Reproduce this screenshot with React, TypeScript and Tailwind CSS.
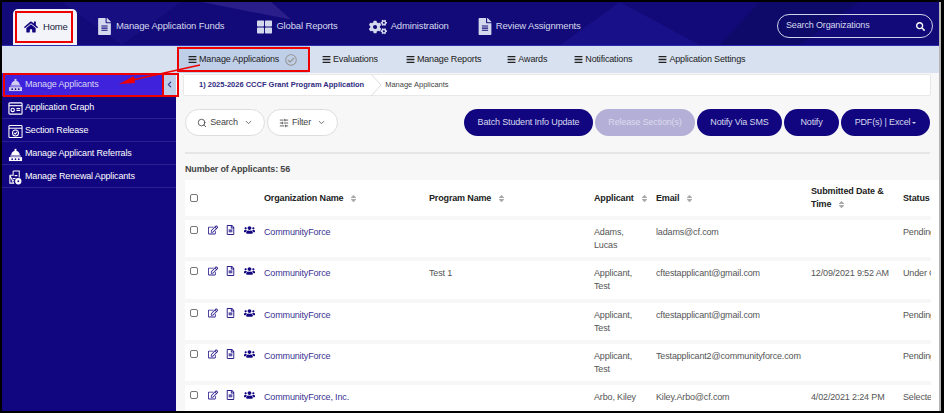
import {
  FaBars,
  FaChevronLeft,
  FaCogs,
  FaFileAlt,
  FaHome,
  FaRegCheckCircle,
  FaRegEdit,
  FaRegFileAlt,
  FaSearch,
  FaSort,
  FaThLarge,
  FaUsers,
} from "react-icons/fa";
import { ChevronDown, Search, SlidersHorizontal } from "lucide-react";

type Row = {
  org: string;
  program?: string;
  applicant: string;
  email: string;
  date?: string;
  status: string;
  h: string;
};

const rows: Row[] = [
  { org: "CommunityForce", applicant: "Adams, Lucas", email: "ladams@cf.com", status: "Pending", h: "h-[37px]" },
  { org: "CommunityForce", program: "Test 1", applicant: "Applicant, Test", email: "cftestapplicant@gmail.com", date: "12/09/2021 9:52 AM", status: "Under Consideration", h: "h-[38px]" },
  { org: "CommunityForce", applicant: "Applicant, Test", email: "cftestapplicant@gmail.com", status: "Pending", h: "h-[37px]" },
  { org: "CommunityForce", applicant: "Applicant, Test", email: "Testapplicant2@communityforce.com", status: "Pending", h: "h-[37px]" },
  { org: "CommunityForce, Inc.", applicant: "Arbo, Kiley", email: "Kiley.Arbo@cf.com", date: "4/02/2021 2:24 PM", status: "Selected", h: "h-[37px]" },
];

const topNav = [
  { label: "Manage Application Funds", icon: <FaFileAlt className="w-[15px] text-[17px]" />, cls: "ml-[20px]" },
  { label: "Global Reports", icon: <FaThLarge className="w-[15px] text-[16px]" />, cls: "ml-[33px]" },
  { label: "Administration", icon: <FaCogs className="w-[18px] text-[18px]" />, cls: "ml-[31px]" },
  { label: "Review Assignments", icon: <FaFileAlt className="w-[14px] text-[17px]" />, cls: "ml-[29px]" },
];

function DeskIcon() {
  return (
    <svg viewBox="0 0 16 16" className="h-[15px] w-[15px]" fill="currentColor">
      <path d="M3.5 8.5a4.5 4.5 0 0 1 9 0z" />
      <rect x="7" y="2" width="2" height="2.5" />
      <rect x="2.5" y="9" width="11" height="1.2" />
      <path d="M1 10.8h14V15H1z" />
      <circle cx="4.5" cy="13" r="0.9" fill="#120680" />
      <circle cx="8" cy="13" r="0.9" fill="#120680" />
      <circle cx="11.5" cy="13" r="0.9" fill="#120680" />
    </svg>
  );
}

function GraphIcon() {
  return (
    <svg viewBox="0 0 16 16" className="h-[15px] w-[15px]" fill="none" stroke="currentColor" strokeWidth="1.2">
      <rect x="1" y="2" width="14" height="12" rx="1" />
      <path d="M1 5h14" />
      <circle cx="5" cy="9.5" r="1.8" />
      <path d="M9 8h4M9 10h4" />
    </svg>
  );
}

function ReleaseIcon() {
  return (
    <svg viewBox="0 0 16 16" className="h-[15px] w-[15px]" fill="none" stroke="currentColor" strokeWidth="1.1">
      <rect x="1" y="1.5" width="14" height="13" rx="1" />
      <path d="M1 4.5h14" />
      <circle cx="8" cy="9.5" r="3.2" />
      <path d="M6.5 9.5l1.2 1.2 2-2.2" />
    </svg>
  );
}

function RenewalIcon() {
  return (
    <svg viewBox="0 0 16 16" className="h-[15px] w-[15px]" fill="none" stroke="currentColor" strokeWidth="1.1">
      <path d="M5.5 1H12v7M6 14H2V5.5z" />
      <path d="M5.5 1v4.5H2" />
      <path d="M7 6h3M5 9h3M5 11h1.5" />
      <circle cx="11" cy="12" r="2.8" fill="currentColor" />
      <circle cx="11" cy="12" r="1" fill="#120680" stroke="none" />
    </svg>
  );
}

const sideItems = [
  { label: "Application Graph", icon: <GraphIcon /> },
  { label: "Section Release", icon: <ReleaseIcon /> },
  { label: "Manage Applicant Referrals", icon: <DeskIcon /> },
  { label: "Manage Renewal Applicants", icon: <RenewalIcon /> },
];

const subNav = [
  { label: "Evaluations", cls: "ml-[14px]" },
  { label: "Manage Reports", cls: "ml-[28px]" },
  { label: "Awards", cls: "ml-[26px]" },
  { label: "Notifications", cls: "ml-[27px]" },
  { label: "Application Settings", cls: "ml-[26px]" },
];

function SortIcon() {
  return <FaSort className="ml-[6px] inline-block text-[9px] text-[#aaa]" />;
}

function Checkbox() {
  return <span className="block h-[8px] w-[8px] shrink-0 rounded-[2px] border border-[#777] bg-white" />;
}

function Header() {
  return (
    <div className="grid h-[36px] grid-cols-[79px_165px_165px_62px_155px_92px_28px] items-center overflow-hidden bg-white font-bold leading-[13px] text-[#222]">
      <div className="pl-[5px]">
        <Checkbox />
      </div>
      <div>Organization Name<SortIcon /></div>
      <div>Program Name<SortIcon /></div>
      <div className="whitespace-nowrap">Applicant<SortIcon /></div>
      <div>Email<SortIcon /></div>
      <div>Submitted Date &amp; Time<SortIcon /></div>
      <div>Status</div>
    </div>
  );
}

function TableRow({ row }: { row: Row }) {
  return (
    <div className={`mt-[4px] grid ${row.h} shrink-0 grid-cols-[79px_165px_165px_62px_155px_92px_28px] bg-white pt-[6px] leading-[13px] text-[#555]`}>
      <div className="flex items-start pl-[5px] text-[#2a1d8c]">
        <Checkbox />
        <FaRegEdit className="-mt-[1px] ml-[10px] w-[10px] text-[10px]" />
        <FaRegFileAlt className="-mt-[1px] ml-[8px] w-[9px] text-[10px]" />
        <FaUsers className="-mt-[2px] ml-[9px] w-[11px] text-[12px] text-[#120680]" />
      </div>
      <div className="text-[#3a3192]">{row.org}</div>
      <div>{row.program}</div>
      <div className="pr-[12px]">{row.applicant}</div>
      <div className="whitespace-nowrap">{row.email}</div>
      <div className="whitespace-nowrap">{row.date}</div>
      <div className="overflow-hidden whitespace-nowrap">{row.status}</div>
    </div>
  );
}

function PillButton({ label, cls, caret }: { label: string; cls: string; caret?: boolean }) {
  return (
    <button className={`flex h-[27px] items-center justify-center rounded-full ${cls}`}>
      {label}
      {caret && <span className="ml-[2px] mt-[1px] border-x-[2px] border-t-[2px] border-x-transparent border-t-current" />}
    </button>
  );
}

export default function App() {
  return (
    <div
      className="flex h-[413px] w-[944px] overflow-hidden border-y-2 border-l-2 border-r-[3px] border-black bg-[#f7f7f7] text-[9px] tracking-[-0.15px]"
      style={{ fontFamily: '"Liberation Sans", Arial, sans-serif' }}
    >
      <div className="flex w-[937px] shrink-0 flex-col">
        {/* top bar */}
        <header className="relative flex h-[44px] shrink-0 items-end overflow-hidden border-b border-[#2b2bb0] bg-[#120a78] text-[#d5d9ee]">
          <svg className="absolute inset-0 h-full w-full" viewBox="0 0 940 44" preserveAspectRatio="none">
            <polygon points="200,0 290,18 270,0" fill="#2a1f8a" />
            <polygon points="620,0 700,44 560,44" fill="#181088" />
            <polygon points="760,0 860,0 800,44 720,44" fill="#0e0a6a" />
            <polygon points="60,0 180,0 120,44" fill="#170e82" />
          </svg>
          <div className="relative ml-[11px] flex h-[36px] w-[64px] items-center rounded-t-[5px] bg-[#f2f4fa] pl-[11px] text-[9.5px] text-[#1a1a3a]">
            <FaHome className="text-[14px] text-[#120680]" />
            <span className="ml-[5px]">Home</span>
          </div>
          <nav className="relative flex h-[36px] items-center pb-[1px] text-[9.5px]">
            {topNav.map((n) => (
              <div key={n.label} className={`flex items-center ${n.cls}`}>
                {n.icon}
                <span className="ml-[4px] whitespace-nowrap">{n.label}</span>
              </div>
            ))}
          </nav>
          <div className="relative ml-auto mb-[7px] mr-[6px] flex h-[24px] w-[156px] items-center justify-between rounded-full border border-[#cfd3ea] pl-[8px] pr-[7px] text-[#d5d9ee]">
            <span>Search Organizations</span>
            <FaSearch className="text-[9px] text-white" />
          </div>
        </header>

        {/* sub nav */}
        <div className="flex h-[27px] shrink-0 items-center bg-[#d8e1f0] text-[#222]">
          <div className="ml-[175px] flex h-full w-[131px] items-center whitespace-nowrap bg-[#c0cfe8] pl-[11px]">
            <FaBars className="mr-[2px] text-[9px]" />
            Manage Applications
            <FaRegCheckCircle className="ml-[6px] text-[12px] text-[#999]" />
          </div>
          {subNav.map((s) => (
            <div key={s.label} className={`flex items-center whitespace-nowrap ${s.cls}`}>
              <FaBars className="mr-[2px] text-[9px]" />
              {s.label}
            </div>
          ))}
        </div>

        <div className="flex min-h-0 flex-1">
          {/* sidebar */}
          <aside className="flex w-[174px] shrink-0 flex-col bg-[#120680] text-white">
            <div className="flex h-[23px] shrink-0 items-center bg-[#3f22dc] text-[#d9d6f5]">
              <span className="ml-[6px] mr-[2px] text-[#cfcdf0]">
                <DeskIcon />
              </span>
              <span>Manage Applicants</span>
              <span className="ml-auto flex h-full w-[14px] items-center justify-center bg-[#c0cfe8] text-[#3a3a9a]">
                <FaChevronLeft className="text-[7px]" />
              </span>
            </div>
            {sideItems.map((s) => (
              <div key={s.label} className="flex h-[23px] shrink-0 items-center border-b border-[#2b2190] pl-[6px] pt-[2px]">
                <span className="mr-[2px]">{s.icon}</span>
                {s.label}
              </div>
            ))}
          </aside>

          {/* content */}
          <main className="min-w-0 flex-1 pl-[9px]">
            <div className="-ml-[2px] mr-[8px] mt-[1px] flex h-[22px] items-center rounded-[2px] border border-[#e8e8e8] bg-white text-[7.5px] tracking-normal text-[#444]">
              <span className="ml-[15px] font-bold text-[#2e2a80]">1) 2025-2026 CCCF Grant Program Application</span>
              <svg viewBox="0 0 10 22" className="ml-[7px] h-[22px] w-[10px]" fill="none" stroke="#ddd">
                <path d="M0 0l10 11L0 22" />
              </svg>
              <span className="ml-[4px]">Manage Applicants</span>
            </div>

            <div className="mr-[9px] mt-[13px] flex items-center border-b-2 border-[#e6e6e6] pb-[16px]">
              <button className="flex h-[27px] w-[80px] items-center justify-center rounded-full border border-[#ddd] bg-white text-[#444]">
                <Search size={10} className="mr-[3px]" />
                Search
                <ChevronDown size={9} className="ml-[6px]" />
              </button>
              <button className="ml-[2px] flex h-[27px] w-[71px] items-center justify-center rounded-full border border-[#ddd] bg-white text-[#444]">
                <SlidersHorizontal size={10} className="mr-[3px]" />
                Filter
                <ChevronDown size={9} className="ml-[6px]" />
              </button>
              <div className="ml-auto flex gap-[2px]">
                <PillButton label="Batch Student Info Update" cls="w-[129px] bg-[#120680] text-[#d5d9ee]" />
                <PillButton label="Release Section(s)" cls="w-[100px] bg-[#b4afd6] text-[#dcdaee]" />
                <PillButton label="Notify Via SMS" cls="w-[85px] bg-[#120680] text-[#d5d9ee]" />
                <PillButton label="Notify" cls="w-[55px] bg-[#120680] text-[#d5d9ee]" />
                <PillButton label="PDF(s) | Excel" caret cls="w-[89px] bg-[#120680] text-[#d5d9ee]" />
              </div>
            </div>

            <div className="mt-[9px] font-bold leading-[12px] text-[#444]">Number of Applicants: 56</div>

            <div className="mt-[5px] flex">
              <div className="flex w-[746px] shrink-0 flex-col overflow-hidden">
                <Header />
                {rows.map((r, i) => (
                  <TableRow key={i} row={r} />
                ))}
              </div>
              <div className="flex-1 bg-white" />
            </div>
          </main>
        </div>
      </div>
      <div className="w-[2px] shrink-0 bg-[#b5b5b5]" />

      {/* annotation marks from the screenshot */}
      <div className="pointer-events-none absolute left-[15px] top-[11px] h-[32px] w-[58px] border-2 border-[#ee0000]" />
      <div className="pointer-events-none absolute left-[177px] top-[47px] h-[25px] w-[133px] border-2 border-[#ee0000]" />
      <div className="pointer-events-none absolute left-[3px] top-[73px] h-[24px] w-[176px] border-2 border-[#ee0000]" />
      <div className="pointer-events-none absolute left-[162px] top-[73px] h-[24px] w-[17px] border-2 border-[#ee0000]" />
      <svg className="pointer-events-none absolute left-0 top-0 h-[413px] w-[944px]" viewBox="0 0 944 413">
        <line x1="200" y1="65" x2="128" y2="81" stroke="#ee0000" strokeWidth="1.5" />
        <polygon points="119,84 134,76 135,83" fill="#ee0000" />
      </svg>
    </div>
  );
}
